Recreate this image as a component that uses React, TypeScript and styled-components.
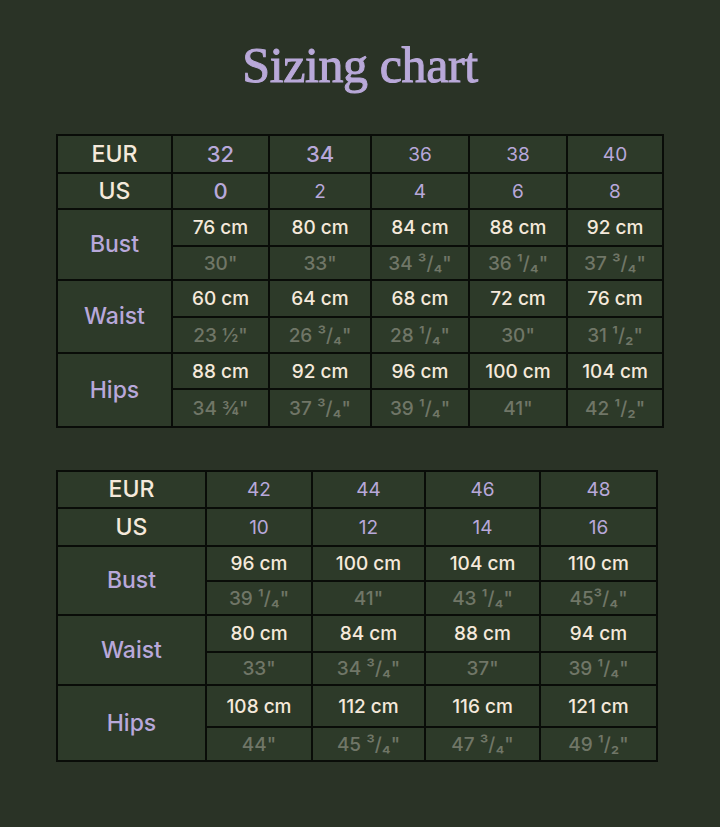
import React from 'react';
import styled, { createGlobalStyle } from 'styled-components';

const Global = createGlobalStyle`
  html, body { margin: 0; padding: 0; background: #2a3326; }
`;

const Page = styled.main`
  width: 720px;
  min-height: 827px;
  box-sizing: border-box;
  padding-top: 40px;
  display: flex;
  flex-direction: column;
  font-family: Inter, "Liberation Sans", sans-serif;
`;

const Title = styled.h1`
  margin: 0 0 44px;
  text-align: center;
  font-family: "Liberation Serif", "DejaVu Serif", serif;
  font-weight: 400;
  font-size: 50px;
  line-height: 50px;
  letter-spacing: -0.4px;
  color: #b9a9d9;
  -webkit-text-stroke: 1px #b9a9d9;
`;

const Tables = styled.div`
  display: flex;
  flex-direction: column;
  align-items: flex-start;
  gap: 42px;
  padding-left: 56px;
`;

const Grid = styled.div<{ $cols: string; $rows: string }>`
  display: grid;
  grid-template-columns: ${p => p.$cols};
  grid-template-rows: ${p => p.$rows};
  gap: 2px;
  padding: 2px;
  background: #090c08;
`;

type Tone = 'head' | 'size' | 'big' | 'label' | 'cm' | 'in';

const toneColor: Record<Tone, string> = {
  head: '#f5e9db',
  size: '#b8a8da',
  big: '#b8a8da',
  label: '#b8a8da',
  cm: '#f5e9db',
  in: '#707667',
};
const toneSize: Record<Tone, string> = {
  head: '23px',
  size: '19px',
  big: '22px',
  label: '23px',
  cm: '19px',
  in: '19px',
};
const toneWeight: Record<Tone, number> = {
  head: 500,
  size: 400,
  big: 500,
  label: 500,
  cm: 500,
  in: 500,
};

const Cell = styled.div<{ $tone: Tone; $span?: boolean }>`
  background: #2d3a29;
  display: flex;
  align-items: center;
  justify-content: center;
  grid-row: ${p => (p.$span ? 'span 2' : 'auto')};
  color: ${p => toneColor[p.$tone]};
  font-size: ${p => toneSize[p.$tone]};
  font-weight: ${p => toneWeight[p.$tone]};
  line-height: 1;
  white-space: nowrap;
`;

type Measure = { name: string; cm: string[]; inch: string[] };
type TableData = {
  cols: string;
  rows: string;
  eur: { v: string; big?: boolean }[];
  us: { v: string; big?: boolean }[];
  measures: Measure[];
};

const t1: TableData = {
  cols: '113px 95px 100px 96px 96px 94px',
  rows: '36px 34px 35px 32px 35px 34px 34px 36px',
  eur: [{ v: '32', big: true }, { v: '34', big: true }, { v: '36' }, { v: '38' }, { v: '40' }],
  us: [{ v: '0', big: true }, { v: '2' }, { v: '4' }, { v: '6' }, { v: '8' }],
  measures: [
    { name: 'Bust', cm: ['76 cm', '80 cm', '84 cm', '88 cm', '92 cm'], inch: ['30"', '33"', '34 ³/₄"', '36 ¹/₄"', '37 ³/₄"'] },
    { name: 'Waist', cm: ['60 cm', '64 cm', '68 cm', '72 cm', '76 cm'], inch: ['23 ½"', '26 ³/₄"', '28 ¹/₄"', '30"', '31 ¹/₂"'] },
    { name: 'Hips', cm: ['88 cm', '92 cm', '96 cm', '100 cm', '104 cm'], inch: ['34 ¾"', '37 ³/₄"', '39 ¹/₄"', '41"', '42 ¹/₂"'] },
  ],
};

const t2: TableData = {
  cols: '147px 104px 111px 113px 115px',
  rows: '35px 36px 33px 32px 35px 31px 40px 32px',
  eur: [{ v: '42' }, { v: '44' }, { v: '46' }, { v: '48' }],
  us: [{ v: '10' }, { v: '12' }, { v: '14' }, { v: '16' }],
  measures: [
    { name: 'Bust', cm: ['96 cm', '100 cm', '104 cm', '110 cm'], inch: ['39 ¹/₄"', '41"', '43 ¹/₄"', '45³/₄"'] },
    { name: 'Waist', cm: ['80 cm', '84 cm', '88 cm', '94 cm'], inch: ['33"', '34 ³/₄"', '37"', '39 ¹/₄"'] },
    { name: 'Hips', cm: ['108 cm', '112 cm', '116 cm', '121 cm'], inch: ['44"', '45 ³/₄"', '47 ³/₄"', '49 ¹/₂"'] },
  ],
};

function SizeTable({ data }: { data: TableData }) {
  return (
    <Grid $cols={data.cols} $rows={data.rows}>
      <Cell $tone="head">EUR</Cell>
      {data.eur.map((s, i) => (
        <Cell key={'e' + i} $tone={s.big ? 'big' : 'size'}>{s.v}</Cell>
      ))}
      <Cell $tone="head">US</Cell>
      {data.us.map((s, i) => (
        <Cell key={'u' + i} $tone={s.big ? 'big' : 'size'}>{s.v}</Cell>
      ))}
      {data.measures.map(m => (
        <React.Fragment key={m.name}>
          <Cell $tone="label" $span>{m.name}</Cell>
          {m.cm.map((v, i) => (
            <Cell key={'c' + i} $tone="cm">{v}</Cell>
          ))}
          {m.inch.map((v, i) => (
            <Cell key={'i' + i} $tone="in">{v}</Cell>
          ))}
        </React.Fragment>
      ))}
    </Grid>
  );
}

export default function App() {
  return (
    <>
      <Global />
      <Page>
        <Title>Sizing chart</Title>
        <Tables>
          <SizeTable data={t1} />
          <SizeTable data={t2} />
        </Tables>
      </Page>
    </>
  );
}
